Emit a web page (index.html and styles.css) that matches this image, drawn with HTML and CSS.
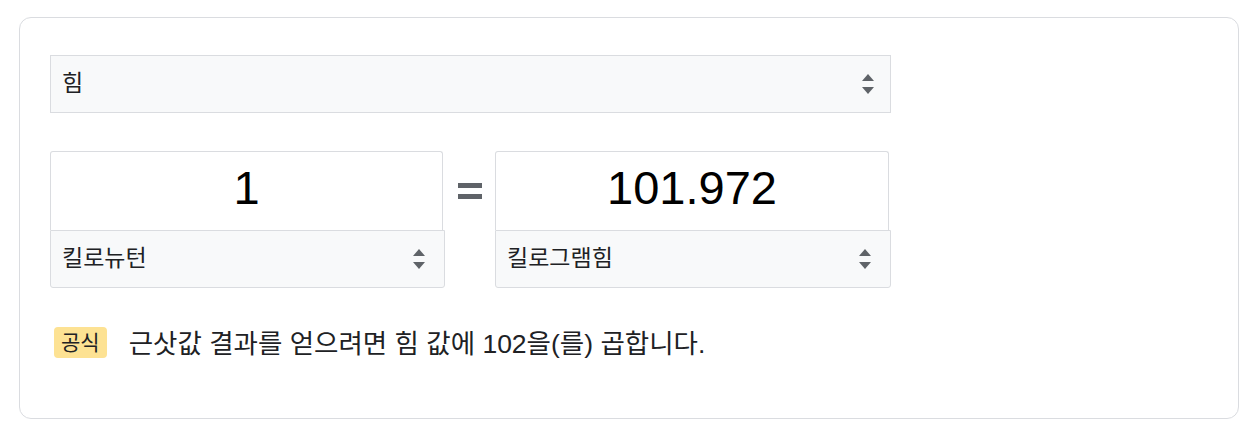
FILE: index.html
```html
<!DOCTYPE html>
<html lang="ko">
<head>
<meta charset="utf-8">
<title>단위 변환기</title>
<link rel="stylesheet" href="styles.css">
</head>
<body>
<div class="card">
  <div class="select select-top">
    <span class="select-label">힘</span>
    <svg class="arrows" width="12" height="20" viewBox="0 0 12 20"><polygon points="6,0 12,7 0,7"/><polygon points="0,13 12,13 6,20"/></svg>
  </div>
  <div class="converter">
    <div class="unit unit-left">
      <div class="value">1</div>
      <div class="select select-unit">
        <span class="select-label">킬로뉴턴</span>
        <svg class="arrows" width="12" height="20" viewBox="0 0 12 20"><polygon points="6,0 12,7 0,7"/><polygon points="0,13 12,13 6,20"/></svg>
      </div>
    </div>
    <div class="equals"><span class="bar"></span><span class="bar"></span></div>
    <div class="unit unit-right">
      <div class="value">101.972</div>
      <div class="select select-unit">
        <span class="select-label">킬로그램힘</span>
        <svg class="arrows" width="12" height="20" viewBox="0 0 12 20"><polygon points="6,0 12,7 0,7"/><polygon points="0,13 12,13 6,20"/></svg>
      </div>
    </div>
  </div>
  <div class="formula">
    <span class="badge">공식</span>
    <span class="formula-text">근삿값 결과를 얻으려면 힘 값에 102을(를) 곱합니다.</span>
  </div>
</div>
</body>
</html>
```

FILE: styles.css
```css
html, body {
  margin: 0;
  padding: 0;
  background: #ffffff;
}

body {
  font-family: "Liberation Sans", "Noto Sans CJK KR", sans-serif;
  color: #202124;
}

.card {
  box-sizing: border-box;
  width: 1220px;
  height: 402px;
  margin: 17px 0 0 19px;
  padding: 37px 30px;
  border: 1px solid #dadce0;
  border-radius: 12px;
}

.select {
  box-sizing: border-box;
  display: flex;
  align-items: center;
  justify-content: space-between;
  background: #f8f9fa;
  border: 1px solid #dadce0;
  padding: 0 16px 0 11px;
}

.select-top {
  width: 841px;
  height: 58px;
}

.select-label {
  font-size: 23px;
  line-height: 28px;
  color: #202124;
  padding-bottom: 2px;
}

.arrows {
  display: block;
  fill: #5f6368;
}

.converter {
  display: flex;
  margin-top: 38px;
}

.unit {
  display: flex;
  flex-direction: column;
}

.unit-left {
  width: 395px;
}

.unit-right {
  width: 396px;
}

.value {
  box-sizing: border-box;
  height: 79px;
  margin-right: 2px;
  border: 1px solid #dadce0;
  border-bottom: none;
  border-radius: 3px 3px 0 0;
  background: #ffffff;
  display: flex;
  align-items: center;
  justify-content: center;
  font-family: "Liberation Sans", sans-serif;
  font-size: 47px;
  line-height: 52px;
  color: #000000;
  padding-bottom: 6px;
}

.select-unit {
  height: 58px;
  border-radius: 0 0 3px 3px;
  padding-right: 19px;
}

.equals {
  width: 50px;
  height: 79px;
  display: flex;
  flex-direction: column;
  align-items: center;
  justify-content: center;
  gap: 6px;
}

.bar {
  display: block;
  width: 24px;
  height: 5px;
  background: #5f6368;
}

.formula {
  display: flex;
  align-items: center;
  margin-top: 37px;
  padding-left: 4px;
}

.badge {
  box-sizing: border-box;
  height: 31px;
  padding: 0 7px;
  background: #fde293;
  border-radius: 4px;
  font-size: 21px;
  line-height: 31px;
  color: #202124;
}

.formula-text {
  margin-left: 22px;
  font-size: 26.5px;
  line-height: 31px;
  padding-top: 4px;
  color: #202124;
}
```
